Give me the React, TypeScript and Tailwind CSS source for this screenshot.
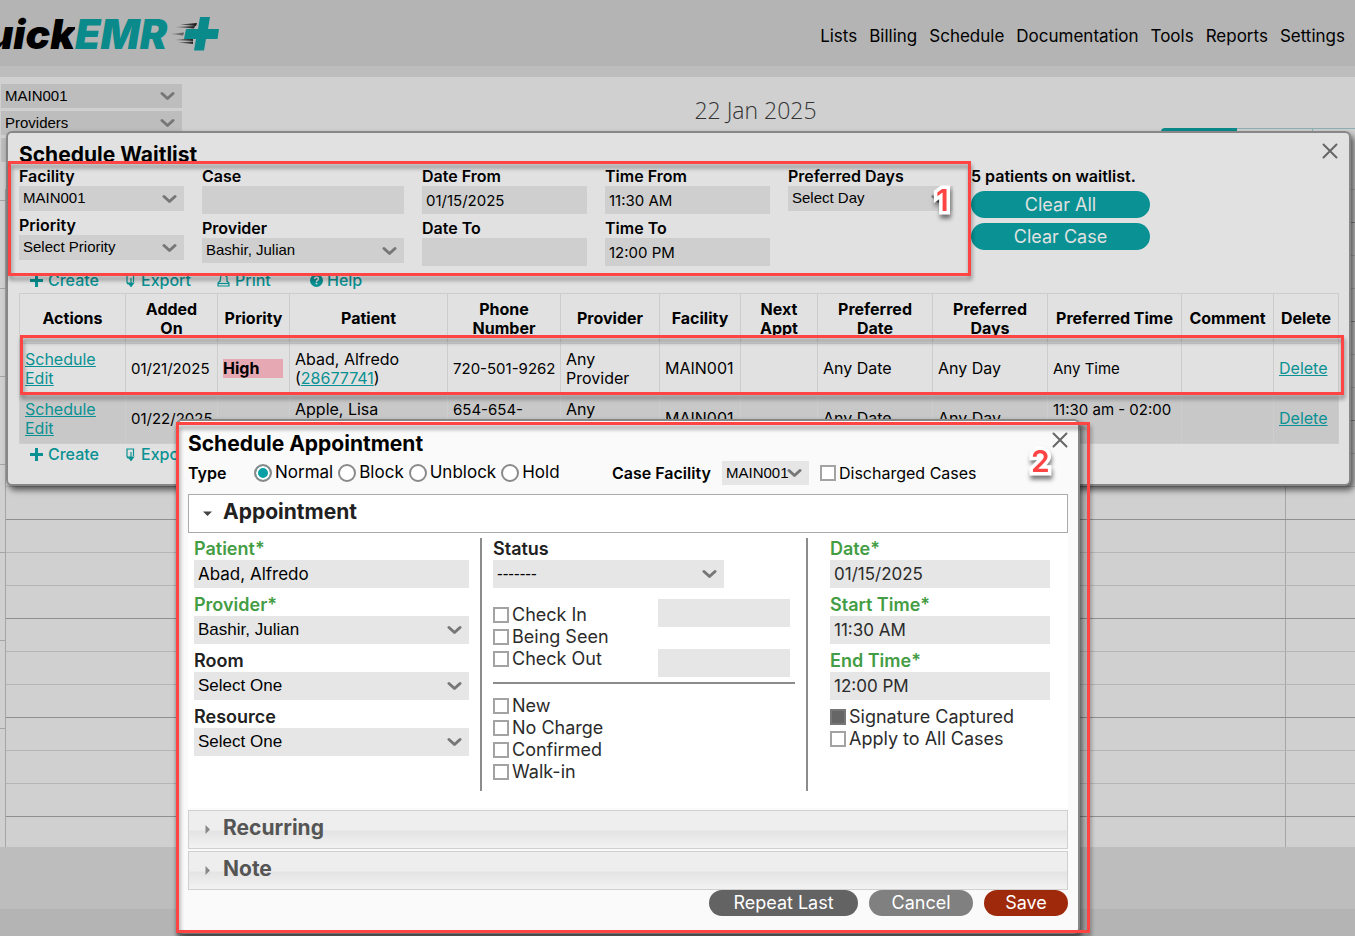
import React from 'react';
import clsx from 'clsx';

interface OptionProps {
  id: string;
  label: string;
  checked?: boolean;
}

const navLinks = ['Lists', 'Billing', 'Schedule', 'Documentation', 'Tools', 'Reports', 'Settings'];

const columns = [
  { title: 'Actions', width: 'w-[106px]' },
  { title: 'Added\nOn', width: 'w-[92px]' },
  { title: 'Priority', width: 'w-[72px]' },
  { title: 'Patient', width: 'w-[158px]' },
  { title: 'Phone\nNumber', width: 'w-[113px]' },
  { title: 'Provider', width: 'w-[99px]' },
  { title: 'Facility', width: 'w-[81px]' },
  { title: 'Next\nAppt', width: 'w-[77px]' },
  { title: 'Preferred\nDate', width: 'w-[115px]' },
  { title: 'Preferred\nDays', width: 'w-[115px]' },
  { title: 'Preferred Time', width: 'w-[134px]' },
  { title: 'Comment', width: 'w-[92px]' },
  { title: 'Delete', width: 'w-[65px]' },
];

const patients = [
  {
    added: '01/21/2025',
    priority: 'High',
    name: 'Abad, Alfredo',
    id: '28677741',
    phone: '720-501-9262',
    time: 'Any Time',
  },
  {
    added: '01/22/2025',
    priority: '',
    name: 'Apple, Lisa',
    id: '28677752',
    phone: '654-654- 6546',
    time: '11:30 am - 02:00 pm',
  },
];

const Chevron = () => (
  <svg
    className="pointer-events-none absolute top-1/2 right-[7px] h-[9px] w-[15px] -translate-y-1/2"
    viewBox="0 0 15 9"
    fill="none"
    stroke="#777"
    strokeWidth="3"
    strokeLinecap="round"
    strokeLinejoin="round"
  >
    <path d="M2 2 L7.5 7 L13 2" />
  </svg>
);

const CloseIcon = () => (
  <svg className="h-4 w-4" viewBox="0 0 16 16" stroke="#666" strokeWidth="2" strokeLinecap="round">
    <path d="M1.5 1.5 L14.5 14.5 M14.5 1.5 L1.5 14.5" />
  </svg>
);

const Select = ({ id, value, className }: { id: string; value: string; className?: string }) => (
  <div className="relative">
    <select
      id={id}
      aria-label={value}
      className={clsx(
        "block w-full appearance-none pl-1 font-['Liberation_Sans',sans-serif] text-black",
        className
      )}
    >
      <option>{value}</option>
    </select>
    <Chevron />
  </div>
);

const FilterField = ({
  label,
  value = '',
  select,
}: {
  label: string;
  value?: string;
  select?: boolean;
}) => {
  const id = 'filter-' + label.toLowerCase().replace(' ', '-');
  return (
    <div>
      <label htmlFor={id} className="block h-[19px] text-base leading-[19px] font-semibold">
        {label}
      </label>
      {select ? (
        <Select id={id} value={value} className="h-[25px] bg-[#cfcfcf] text-[15px]" />
      ) : (
        <input
          id={id}
          defaultValue={value}
          className="block h-7 w-full bg-[#cfcfcf] pl-1 text-[15px]"
        />
      )}
    </div>
  );
};

const FormField = ({
  label,
  value,
  select,
  required,
}: {
  label: string;
  value: string;
  select?: boolean;
  required?: boolean;
}) => {
  const id = 'appt-' + label.toLowerCase().replace(' ', '-');
  return (
    <div>
      <label
        htmlFor={id}
        className={clsx(
          'block h-[22px] text-lg leading-[22px] font-semibold',
          required ? 'text-[#449d44]' : 'text-[#212121]'
        )}
      >
        {label}
        {required && '*'}
      </label>
      {select ? (
        <Select id={id} value={value} className="h-7 bg-[#e6e6e6] text-[17px]" />
      ) : (
        <input
          id={id}
          defaultValue={value}
          className="block h-7 w-full bg-[#e6e6e6] pl-1 text-[17px]"
        />
      )}
    </div>
  );
};

const CheckOption: React.FC<OptionProps> = ({ id, label, checked }) => (
  <div className="flex h-[22px] items-center gap-[3px]">
    <input
      type="checkbox"
      id={id}
      defaultChecked={checked}
      className="h-4 w-4 appearance-none border-2 border-[#a3a3a3] bg-white checked:border-[#777] checked:bg-[#666]"
    />
    <label htmlFor={id} className="whitespace-nowrap">
      {label}
    </label>
  </div>
);

const RadioOption: React.FC<OptionProps> = ({ id, label, checked }) => (
  <div className="flex items-center gap-[3px]">
    <input
      type="radio"
      name="type"
      id={id}
      defaultChecked={checked}
      className="h-[18px] w-[18px] appearance-none rounded-full border-2 border-[#8a8a8a] bg-white checked:bg-[#09a0a5] checked:shadow-[inset_0_0_0_2px_#fff]"
    />
    <label htmlFor={id}>{label}</label>
  </div>
);

const Toolbar = () => (
  <div className="flex h-5 items-center text-base font-medium text-[#099193]">
    <button className="ml-[11px] flex w-[96px] items-center gap-[5px]">
      <svg className="h-[13px] w-[13px]" viewBox="0 0 13 13" fill="currentColor">
        <path d="M5 0h3v5h5v3H8v5H5V8H0V5h5z" />
      </svg>
      Create
    </button>
    <button className="flex w-[91px] items-center gap-[6px]">
      <svg
        className="h-[13px] w-[9px]"
        viewBox="0 0 9 13"
        fill="none"
        stroke="currentColor"
        strokeWidth="1.2"
      >
        <path d="M3 10 Q1 10 1 8 V1 H7.500 V8" />
        <path d="M5 4 V10" />
        <path d="M2.5 9 L5 12.5 L7.5 9 Z" fill="currentColor" />
      </svg>
      Export
    </button>
    <button className="flex w-[93px] items-center gap-[5px]">
      <svg
        className="h-[13px] w-[13px]"
        viewBox="0 0 13 13"
        fill="none"
        stroke="currentColor"
        strokeWidth="1.2"
      >
        <path d="M3 8 L4 1 H8 L10 3 V8" />
        <path d="M3 7 L1 9 V12 H12 V9 L10 7" />
        <path d="M1 9.5 H12" />
      </svg>
      Print
    </button>
    <button className="flex items-center gap-1">
      <svg className="h-[13px] w-[13px]" viewBox="0 0 13 13">
        <circle cx="6.5" cy="6.5" r="6.5" fill="currentColor" />
        <path
          d="M4.6 5 Q4.6 3.2 6.5 3.2 Q8.5 3.2 8.5 4.9 Q8.5 5.9 7.3 6.4 Q6.5 6.8 6.5 7.8"
          fill="none"
          stroke="#e1e1e1"
          strokeWidth="1.5"
        />
        <rect x="5.7" y="8.7" width="1.6" height="1.6" fill="#e1e1e1" />
      </svg>
      Help
    </button>
  </div>
);

const Logo = () => (
  <a href="#" className="flex items-center text-[41px] leading-none font-black italic">
    <span className="flex w-[75px] justify-end overflow-hidden text-black">Quick</span>
    <span className="w-[95px] text-[#0a8a8a]">EMR</span>
    <svg className="h-9 w-[50px]" viewBox="0 0 50 36">
      <defs>
        <linearGradient id="speed" x1="0" x2="1">
          <stop offset="0" stopColor="#111" stopOpacity="0.1" />
          <stop offset="1" stopColor="#111" />
        </linearGradient>
      </defs>
      <path
        d="M10 8.500 L27 7 L26 10 Z M5 11 L25 10 L24 12.500 Z M0 18 L14 16.500 L13 19.500 Z M5 24 L23 22 L23 25 Z M8 26.500 L23 25.500 L23 28 Z"
        fill="url(#speed)"
      />
      <path
        d="M30 1 H40 L38 13 H49 L47.500 23 H36 L34 34.500 H24 L26 23 H14 L16 13 H28 Z"
        fill="#0a8a8a"
      />
    </svg>
  </a>
);

const Calendar = () => (
  <div className="flex">
    {/* time ruler */}
    <div className="w-[6px] border-r border-[#a5a5a5] pt-[11px]">
      {Array.from({ length: 7 }).map((_, i) => (
        <div key={i} className="h-[88px] border-t border-[#a5a5a5]" />
      ))}
    </div>
    <div className="flex-1">
      {Array.from({ length: 20 }).map((_, i) => (
        <div
          key={i}
          className={clsx(
            'flex h-[33px] border-t last:h-[31px]',
            i % 3 === 1 ? 'border-[#8f8f8f]' : 'border-[#b5b5b5]'
          )}
        >
          <div className="flex-1 border-r border-[#a5a5a5]" />
          <div className="w-[69px]" />
        </div>
      ))}
    </div>
  </div>
);

const WaitlistDialog = () => (
  <section className="absolute top-[131px] right-[4px] left-[6px] rounded-md border-2 border-[#878787] bg-[#e1e1e1] pt-[10px] pr-[11px] pb-[20px] pl-[11px] shadow-[3px_4px_6px_rgba(0,0,0,0.6)]">
    <div className="flex h-6 items-center justify-between">
      <h2 className="text-[21px] font-bold">Schedule Waitlist</h2>
      <button aria-label="Close waitlist" className="self-start">
        <CloseIcon />
      </button>
    </div>
    <div className="flex gap-[18px]">
      <div className="flex w-[165px] flex-col gap-[5px]">
        <FilterField label="Facility" value="MAIN001" select />
        <FilterField label="Priority" value="Select Priority" select />
      </div>
      <div className="flex w-[202px] flex-col gap-[5px]">
        <FilterField label="Case" />
        <FilterField label="Provider" value="Bashir, Julian" select />
      </div>
      <div className="flex w-[165px] flex-col gap-[5px]">
        <FilterField label="Date From" value="01/15/2025" />
        <FilterField label="Date To" />
      </div>
      <div className="flex w-[165px] flex-col gap-[5px]">
        <FilterField label="Time From" value="11:30 AM" />
        <FilterField label="Time To" value="12:00 PM" />
      </div>
      <div className="w-[165px]">
        <FilterField label="Preferred Days" value="Select Day" select />
      </div>
      <div className="flex w-[179px] flex-col gap-[5px]">
        <p className="h-[19px] text-base leading-[19px] font-semibold whitespace-nowrap">
          5 patients on waitlist.
        </p>
        <button className="h-[27px] rounded-full bg-[#099193] text-lg leading-none text-[#e1e1e1]">
          Clear All
        </button>
        <button className="h-[27px] rounded-full bg-[#099193] text-lg leading-none text-[#e1e1e1]">
          Clear Case
        </button>
      </div>
    </div>
    <div className="pt-1 pb-[3px]">
      <Toolbar />
    </div>
    <table className="w-full table-fixed border-collapse text-base leading-[19px]">
      <thead>
        <tr className="h-[50px]">
          {columns.map((col) => (
            <th
              key={col.title}
              className={clsx('border border-[#cdcdcd] font-bold whitespace-pre-line', col.width)}
            >
              {col.title}
            </th>
          ))}
        </tr>
      </thead>
      <tbody>
        {patients.map((p) => (
          <tr
            key={p.id}
            className="h-[50px] even:bg-[#c8c8c8] [&>td]:border [&>td]:border-[#cdcdcd] [&>td]:pl-[5px]"
          >
            <td className="text-[#099193] underline">
              <a href="#" className="block">Schedule</a>
              <a href="#" className="block">Edit</a>
            </td>
            <td className="text-[15px]">{p.added}</td>
            <td className="pr-[6px] font-bold">
              {p.priority && <div className="bg-[#e6a9b4]">{p.priority}</div>}
            </td>
            <td>
              {p.name}
              <br />(<a href="#" className="text-[#099193] underline">{p.id}</a>)
            </td>
            <td className="text-[15px]">{p.phone}</td>
            <td className="whitespace-pre-line">{'Any\nProvider'}</td>
            <td>MAIN001</td>
            <td />
            <td>Any Date</td>
            <td>Any Day</td>
            <td className="text-[15px]">{p.time}</td>
            <td />
            <td>
              <a href="#" className="text-[#099193] underline">Delete</a>
            </td>
          </tr>
        ))}
      </tbody>
    </table>
    <Toolbar />
  </section>
);

const AccordionHeader = ({ title, open }: { title: string; open?: boolean }) => (
  <button
    className={clsx(
      'flex h-[39px] w-full items-center border text-left text-[21px] font-bold',
      open
        ? 'border-[#aaa] bg-white text-[#212121]'
        : 'border-[#d0d0d0] bg-linear-to-b from-[#eee] from-50% via-[#e4e4e4] via-55% to-[#f2f2f2] text-[#555]'
    )}
  >
    <svg className="mr-[11px] ml-[14px] h-[9px] w-[9px]" viewBox="0 0 9 9" fill={open ? '#444' : '#888'}>
      {open ? <path d="M0 2.500 H9 L4.500 7 Z" /> : <path d="M2.500 0 V9 L7 4.500 Z" />}
    </svg>
    <span className="pb-[3px]">{title}</span>
  </button>
);

const AppointmentDialog = () => (
  <section className="absolute top-[419px] left-[176px] w-[904px] rounded-md border-2 border-[#878787] bg-[#fafafa] px-[10px] pt-[11px] pb-4 shadow-[3px_4px_6px_rgba(0,0,0,0.6)]">
    <div className="flex h-6 items-center justify-between">
      <h2 className="text-[21px] font-bold">Schedule Appointment</h2>
      <button aria-label="Close appointment" className="self-start">
        <CloseIcon />
      </button>
    </div>
    <div className="flex h-[38px] items-center pb-1 text-base">
      <span className="w-[66px] font-semibold">Type</span>
      <div className="flex w-[358px] gap-[5px] text-[17px]">
        <RadioOption id="type-normal" label="Normal" checked />
        <RadioOption id="type-block" label="Block" />
        <RadioOption id="type-unblock" label="Unblock" />
        <RadioOption id="type-hold" label="Hold" />
      </div>
      <label htmlFor="case-facility" className="w-[110px] font-semibold">
        Case Facility
      </label>
      <div className="mr-[11px] w-[87px]">
        <Select id="case-facility" value="MAIN001" className="h-6 bg-[#e6e6e6] text-[15px]" />
      </div>
      <CheckOption id="discharged" label="Discharged Cases" />
    </div>
    <AccordionHeader title="Appointment" open />
    <div className="mb-[2px] flex bg-white pt-[5px] pb-[17px] pl-[6px] text-lg text-[#2b2b2b]">
      <div className="flex w-[286px] flex-col gap-[6px] pr-[11px] text-black">
        <FormField label="Patient" value="Abad, Alfredo" required />
        <FormField label="Provider" value="Bashir, Julian" select required />
        <FormField label="Room" value="Select One" select />
        <FormField label="Resource" value="Select One" select />
      </div>
      <div className="h-[253px] w-[328px] border-x-2 border-[#8c8c8c] pr-[11px] pl-[11px]">
        <div className="w-[231px]">
          <FormField label="Status" value="-------" select />
        </div>
        <div className="flex justify-between pt-4 pr-[5px]">
          <div className="pb-3">
            <CheckOption id="check-in" label="Check In" />
            <CheckOption id="being-seen" label="Being Seen" />
            <CheckOption id="check-out" label="Check Out" />
          </div>
          <div className="-mt-[5px] flex w-[132px] flex-col gap-[22px]">
            <input aria-label="Check in time" className="h-7 w-full bg-[#e6e6e6]" />
            <input aria-label="Check out time" className="h-7 w-full bg-[#e6e6e6]" />
          </div>
        </div>
        <div className="border-t-2 border-[#8c8c8c] pt-[11px]">
          <CheckOption id="new" label="New" />
          <CheckOption id="no-charge" label="No Charge" />
          <CheckOption id="confirmed" label="Confirmed" />
          <CheckOption id="walk-in" label="Walk-in" />
        </div>
      </div>
      <div className="ml-[22px] flex w-[220px] flex-col gap-[6px]">
        <FormField label="Date" value="01/15/2025" required />
        <FormField label="Start Time" value="11:30 AM" required />
        <FormField label="End Time" value="12:00 PM" required />
        <div>
          <CheckOption id="signature" label="Signature Captured" checked />
          <CheckOption id="apply-all" label="Apply to All Cases" />
        </div>
      </div>
    </div>
    <div className="flex flex-col gap-[2px]">
      <AccordionHeader title="Recurring" />
      <AccordionHeader title="Note" />
    </div>
    <div className="flex justify-end gap-[11px] text-lg leading-none text-white">
      <button className="h-[26px] w-[149px] rounded-full bg-[#636363]">Repeat Last</button>
      <button className="h-[26px] w-[104px] rounded-full bg-[#808080]">Cancel</button>
      <button className="h-[26px] w-[84px] rounded-full bg-[#9e2a0b]">Save</button>
    </div>
  </section>
);

const Highlight = ({ className }: { className: string }) => (
  <div
    className={clsx(
      'pointer-events-none absolute border-3 border-[#ff4444] drop-shadow-[1px_4px_2px_rgba(0,0,0,0.4)]',
      className
    )}
  />
);

const Step = ({ value, className }: { value: number; className: string }) => (
  <span
    className={clsx(
      'absolute text-[30px] leading-none font-semibold text-[#ff4444] drop-shadow-[1px_4px_2px_rgba(0,0,0,0.5)] [-webkit-text-stroke:7px_white] [paint-order:stroke_fill]',
      className
    )}
  >
    {value}
  </span>
);

const App: React.FC = () => {
  return (
    <div className="relative flex min-h-screen flex-col overflow-hidden bg-[#d0d0d0] font-['Inter',sans-serif] text-black">
      <header className="flex h-[77px] items-center justify-between border-b-11 border-[#bdbdbd] bg-[#b4b4b4] pt-[2px] pr-[10px]">
        <Logo />
        <nav className="flex gap-3 pt-[6px] text-[17px]">
          {navLinks.map((link) => (
            <a key={link} href="#">
              {link}
            </a>
          ))}
        </nav>
      </header>

      <div className="flex h-[112px] pt-[7px] pl-px">
        <div className="flex w-[181px] flex-col gap-[3px]">
          <Select id="page-facility" value="MAIN001" className="h-6 bg-[#bdbdbd] text-[15px]" />
          <Select id="page-providers" value="Providers" className="h-6 bg-[#bdbdbd] text-[15px]" />
          <div className="h-6 bg-[#bdbdbd]" />
        </div>
        <div className="flex-1">
          <h1 className="h-[44px] pt-[10px] pr-[26px] text-center font-['Open_Sans',sans-serif] text-[23px] leading-8 font-light text-[#333]">
            22 Jan 2025
          </h1>
          <div className="flex justify-end text-sm">
            <button className="h-7 w-[76px] rounded-tl bg-[#0a8a8a] text-white">Day</button>
            <button className="h-7 w-[76px] border-t border-r border-[#8fb0b5]">Week</button>
            <button className="h-7 w-[42px] border-t border-[#8fb0b5]">List</button>
          </div>
        </div>
      </div>

      <Calendar />
      <div className="h-[62px] bg-[#bdbdbd]" />
      <footer className="flex-1 bg-[#b4b4b4]" />

      <WaitlistDialog />
      <Highlight className="top-[161px] left-[8px] h-[115px] w-[963px]" />
      <Highlight className="top-[335px] right-[11px] left-[20px] h-[60px]" />
      <Step value={1} className="top-[185px] left-[936px]" />

      <AppointmentDialog />
      <Highlight className="top-[422px] left-[176px] h-[511px] w-[914px]" />
      <Step value={2} className="top-[446px] left-[1031px]" />
    </div>
  );
};

export default App;
